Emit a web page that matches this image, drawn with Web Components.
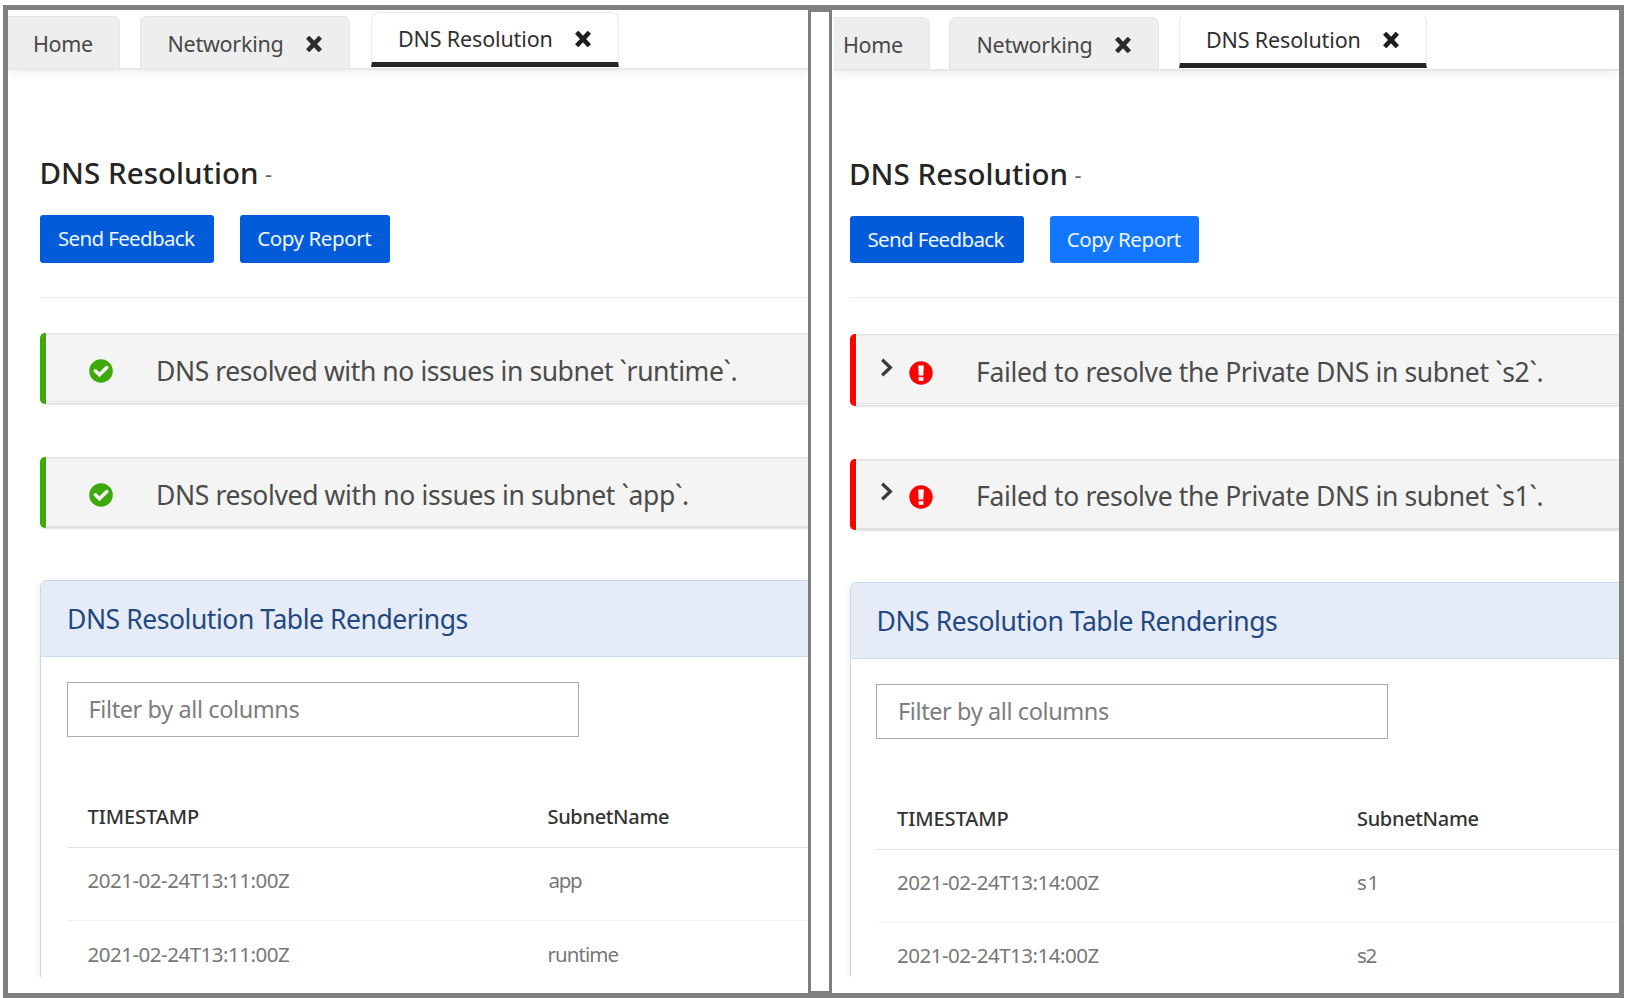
<!DOCTYPE html>
<html lang="en">
<head>
<meta charset="utf-8">
<title>DNS Resolution</title>
<style>
html,body{margin:0;background:#fff}
body{width:1626px;height:998px;overflow:hidden;font-family:"Noto Sans","Open Sans",sans-serif;color:#333}
</style>
</head>
<body>
<compare-board></compare-board>
<script>
const define = (name, html, after) => customElements.define(name, class extends HTMLElement {
  constructor(){ super(); this.attachShadow({mode:'open'}).innerHTML = html; }
  connectedCallback(){ if (after) after.call(this, this.shadowRoot); }
});

/* One line of text whose inked width is held to the "w" attribute by tracking. */
define('ui-text', `<style>
:host{display:block;white-space:pre;line-height:1.36;flex:none;overflow:visible}
span{display:block}
</style><span><slot></slot></span>`, function(root){
  const w = +this.getAttribute('w'), fs = +this.getAttribute('size'), wt = this.getAttribute('weight') || 370;
  const t = this.textContent, s = root.querySelector('span');
  this.style.fontSize = fs + 'px'; this.style.fontWeight = wt; this.style.width = w + 'px';
  const c = document.createElement('canvas').getContext('2d');
  c.font = wt + ' ' + fs + 'px "Noto Sans"';
  const m = c.measureText(t), ink = m.actualBoundingBoxLeft + m.actualBoundingBoxRight;
  if (t.length > 1) s.style.letterSpacing = ((w - ink) / (t.length - 1)).toFixed(3) + 'px';
  s.style.marginLeft = m.actualBoundingBoxLeft.toFixed(2) + 'px';
});

define('close-icon', `<style>:host{display:block;flex:none;width:16px;height:16px}svg{display:block}</style>
<svg width="16" height="16" viewBox="0 0 16 16"><path d="M3.2 2.9 12.8 13.1M12.8 2.9 3.2 13.1" stroke="currentColor" stroke-width="4.5" stroke-linecap="square"/></svg>`);

define('tab-item', `<style>
:host{display:flex;box-sizing:border-box;align-items:center;height:52px;background:#eee;border:1.5px solid #e6e6e6;border-bottom:0;border-radius:7px 7px 0 0;color:#484848;flex:none;padding-top:2px}
:host([active]){height:55px;margin-bottom:1px;background:#fff;border-color:#ebebeb;border-bottom:5px solid #262626;border-radius:8px 8px 0 0;color:#303030;padding-top:2px}
:host([cut]){border-left:0;border-top-left-radius:0}
</style><slot></slot>`);

define('tab-strip', `<style>
:host{display:flex;align-items:flex-end;box-sizing:border-box;border-bottom:2px solid #e7e7e7;box-shadow:0 3px 10px rgba(0,0,0,.07);height:60px;flex:none}
</style><slot></slot>`);

define('blue-button', `<style>
:host{display:flex;align-items:center;justify-content:center;height:47.5px;border-radius:3px;background:var(--fill,#025cda);color:#f0f6ff;flex:none;box-sizing:border-box;padding-top:1px}
:host([hot]){--fill:#1276ff}
</style><slot></slot>`);

define('alert-bar', `<style>
:host{display:flex;align-items:center;box-sizing:border-box;flex:none;height:71px;border-radius:5px 0 0 5px;border-left:6px solid #3fa90b;background:#f4f4f4;color:#4b4b4b;box-shadow:inset 0 1.5px #e4e4e4,inset 1px 0 #fff,inset 0 -2px #dedede,0 1px 2px rgba(0,0,0,.12);padding-top:5px}
:host([open]){box-shadow:inset 0 1.5px #e4e4e4,inset 1px 0 #fff,inset 0 -1px #dfdfdf,inset 0 -2px #fafafa,inset 0 -3px #e3e3e3,0 1px 2px rgba(0,0,0,.1)}
:host([error]){border-left-color:#f00}
svg{display:block;flex:none}
.ok{margin:0 45.5px 0 42.5px}
.arrow,.bad{display:none}
:host([error]) .ok{display:none}
:host([error]) .arrow{display:block;margin:-11px 16px 0 24.5px}
:host([error]) .bad{display:block;margin:0 45px 0 0}
</style>
<svg class="ok" width="24" height="24" viewBox="0 0 24 24"><circle cx="12" cy="12" r="11.8" fill="#3fa90b"/><path d="M6.3 11.8 10.4 15.8 17.8 8.5" fill="none" stroke="#f7f7f7" stroke-width="3.5" stroke-linecap="round"/></svg>
<svg class="arrow" width="13" height="19" viewBox="0 0 13 19"><path d="M2.2 1.8 10.3 9.5 2.2 17.2" fill="none" stroke="#3a3a3a" stroke-width="3.3"/></svg>
<svg class="bad" width="24" height="24" viewBox="0 0 24 24"><circle cx="12" cy="12" r="11.7" fill="#f00"/><path d="M9.2 4.4h5.6l-.5 10H9.7z" fill="#fff"/><path d="M9.6 16.2h4.8v3.6H9.6z" fill="#fff"/></svg>
<slot></slot>`);

define('filter-box', `<style>
:host{display:flex;align-items:center;box-sizing:border-box;height:55px;width:512px;border:1.5px solid #ababab;background:#fff;color:#7d7d7d;padding:1px 0 0 23px;margin:25px 0 0 25.5px;flex:none}
</style><slot></slot>`);

define('table-row', `<style>
:host{display:grid;grid-template-columns:461px auto;justify-content:start;align-items:center;box-sizing:border-box;height:73px;margin-left:25.5px;padding:0 0 6px 21px;border-bottom:1px solid #f1f1f1;color:#777;flex:none}
:host([head]){height:63px;padding-bottom:0;padding-top:2px;margin-top:48px;border-bottom-color:#e4e4e4;color:#333}
:host([last]){border-bottom:0}
</style><slot></slot>`);

define('data-card', `<style>
:host{display:flex;flex-direction:column;box-sizing:border-box;border-left:1.5px solid #c6d9f0;border-top:1px solid #c3d6ef;border-radius:7px 0 0 0;box-shadow:-2px 2px 5px rgba(0,0,0,.06);clip-path:inset(-5px 0 0 -10px);overflow:hidden;flex:none;height:397px}
header{display:flex;align-items:center;box-sizing:border-box;flex:none;height:76px;background:#e5ecf8;border-bottom:1.5px solid #c9dbf1;padding:2px 0 0 28px;color:#234880}
</style><header><slot name="title"></slot></header><slot></slot>`);

const panel = o => `
<section class="panel ${o.cls}">
  <tab-strip>
    <tab-item cut class="home"><ui-text w="58" size="21.5">Home</ui-text></tab-item>
    <tab-item class="net"><ui-text w="113" size="21.5">Networking</ui-text><close-icon></close-icon></tab-item>
    <tab-item active class="dns"><ui-text w="151.5" size="21.5">DNS Resolution</ui-text><close-icon></close-icon></tab-item>
  </tab-strip>
  <div class="page">
    <div class="title"><ui-text w="215.5" size="29.5" weight="480">DNS Resolution</ui-text><ui-text w="6.5" size="22">-</ui-text></div>
    <div class="buttons">
      <blue-button style="width:174px"><ui-text w="136" size="20.5" weight="400">Send Feedback</ui-text></blue-button>
      <blue-button style="width:149.5px" ${o.hot}><ui-text w="113" size="20.5" weight="400">Copy Report</ui-text></blue-button>
    </div>
    <hr>
    ${o.alerts.map(([t,w],i) => `<alert-bar class="a${i}" ${i?'':'open'} ${o.error}><ui-text w="${w}" size="26.5">${t}</ui-text></alert-bar>`).join('')}
    <data-card>
      <ui-text slot="title" w="398.5" size="26.5">DNS Resolution Table Renderings</ui-text>
      <filter-box><ui-text w="209" size="23.5">Filter by all columns</ui-text></filter-box>
      <table-row head><ui-text w="111.5" size="20" weight="500">TIMESTAMP</ui-text><ui-text w="120.5" size="20" weight="500">SubnetName</ui-text></table-row>
      ${o.rows.map(([d,n,w],i) => `<table-row ${i?'last':''}><ui-text w="201.5" size="20.5">${d}</ui-text><ui-text w="${w}" size="20.5">${n}</ui-text></table-row>`).join('')}
    </data-card>
  </div>
</section>`;

define('compare-board', `<style>
:host{display:grid;grid-template-columns:800px 24px 787px;box-sizing:border-box;width:1621px;height:993px;margin:5px 0 0 3px;border:5px solid #808080;background:#fff}
.split{border:solid #808080;border-width:2px 3px;background:#fff}
.panel{display:flex;flex-direction:column;overflow:hidden;min-width:0}
.right{margin:6px 0 0 2px}
.right tab-strip{height:55px}
.page{display:flex;flex-direction:column;flex:none}
.left .page{padding-left:32px}
.right .page{padding-left:15.5px}
.title{display:flex;align-items:center;height:40px;margin-top:83.5px;color:#252525}
.title ui-text:first-child{margin-left:1.5px}
.title ui-text + ui-text{margin-left:8px;color:#666}
.buttons{display:flex;gap:26px;margin-top:21.5px}
.right .buttons{margin-top:21px}
hr{width:100%;height:1px;border:0;margin:34.5px 0 0;background:#ebebeb}
.right hr{margin-top:34px}
.a0{margin-top:35px}.a1{margin-top:53px}
.right .a0{margin-top:36px;height:72px}.right .a1{margin-top:52.5px}
data-card{margin-top:52px}
.right data-card{height:395px}
tab-item close-icon{margin:0 0 0 23px;color:#2c2c2c}
.dns close-icon{color:#1d1d1d}
.home{width:112px;padding-left:27px;margin-right:20px}
.right .home{width:96px;padding-left:11px;margin-right:19px}
.net{width:210px;padding-left:28.5px;margin-right:21px}
.right .net{margin-right:20px}
.dns{width:248px;padding-left:28px}
</style>
${panel({cls:'left',hot:'',error:'',
  alerts:[['DNS resolved with no issues in subnet \`runtime\`.',578.5],['DNS resolved with no issues in subnet \`app\`.',530]],
  rows:[['2021-02-24T13:11:00Z','app',33.5],['2021-02-24T13:11:00Z','runtime',70]]})}
<div class="split"></div>
${panel({cls:'right',hot:'hot',error:'error',
  alerts:[['Failed to resolve the Private DNS in subnet \`s2\`.',564.5],['Failed to resolve the Private DNS in subnet \`s1\`.',564.5]],
  rows:[['2021-02-24T13:14:00Z','s1',17.5],['2021-02-24T13:14:00Z','s2',18.5]]})}`);
</script>
</body>
</html>
